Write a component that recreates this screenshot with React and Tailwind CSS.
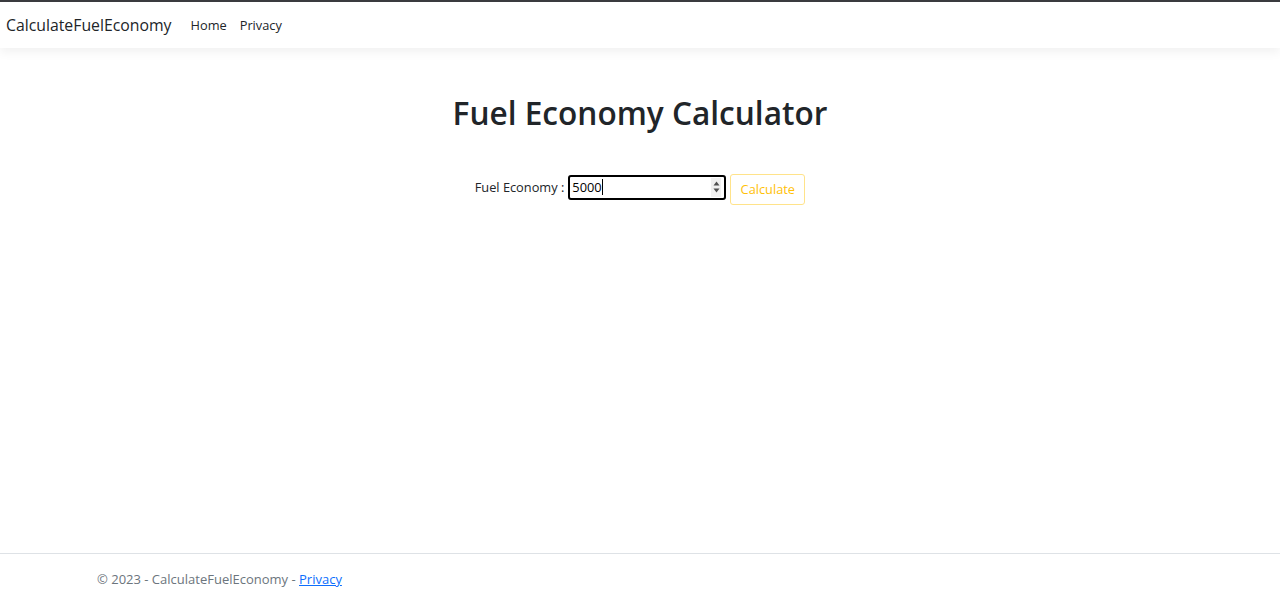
import React from 'react';

export default function App() {
  return (
    <div className="min-h-screen flex flex-col bg-white text-[#212529] font-['Open_Sans',sans-serif]">
      {/* Navbar */}
      <header className="border-t-2 border-[#3a3b3f] bg-white shadow-[0_4px_10px_rgba(0,0,0,0.06)]">
        <nav className="h-[46px] flex items-center pl-[6px] pt-[2px]">
          <a className="text-[15.8px] text-[#212529] mr-[19px]">CalculateFuelEconomy</a>
          <a className="text-[12.8px] text-[#212529] mr-[13px]">Home</a>
          <a className="text-[12.8px] text-[#212529]">Privacy</a>
        </nav>
      </header>

      {/* Main */}
      <main className="flex-1 flex flex-col items-center">
        <h1 className="mt-[46px] text-[31.6px] font-semibold leading-[1.2] text-[#212529]">
          Fuel Economy Calculator
        </h1>
        <div className="mt-[42px] flex items-start">
          <label className="mt-[4px] text-[12.8px] text-[#212529] mr-[4px]">Fuel Economy :</label>
          {/* number input, drawn as focused with caret and spin buttons */}
          <div className="mt-[1px] w-[158px] h-[25px] border-2 border-black rounded-[3px] flex items-center pl-[2px] pr-[3px]">
            <span className="text-[12.8px] text-black leading-none">5000</span>
            <span className="w-px h-[16px] bg-black" />
            <span className="ml-auto flex flex-col items-center justify-center w-[10px] h-[19px] bg-[#f0f0f0]">
              <svg width="7" height="5" viewBox="0 0 7 5"><path d="M3.5 0.5 L6.5 4.5 L0.5 4.5 Z" fill="#505050" /></svg>
              <svg width="7" height="5" viewBox="0 0 7 5" className="mt-[2px]"><path d="M0.5 0.5 L6.5 0.5 L3.5 4.5 Z" fill="#505050" /></svg>
            </span>
          </div>
          <button className="ml-[4px] h-[31px] w-[75px] border border-[#ffe38a] rounded-[3px] text-[12.8px] text-[#ffc107] bg-white">
            Calculate
          </button>
        </div>
      </main>

      {/* Footer */}
      <footer className="border-t border-[#dee2e6] h-[47px] flex items-center pl-[97px] pt-[6px]">
        <span className="text-[13px] text-[#6c757d]">
          © 2023 - CalculateFuelEconomy -{' '}
          <a className="text-[#0d6efd] underline">Privacy</a>
        </span>
      </footer>
    </div>
  );
}
